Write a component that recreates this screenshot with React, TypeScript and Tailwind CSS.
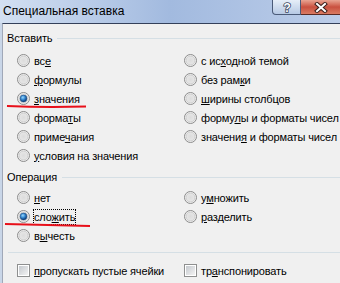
import React from "react"

type Opt = { pre: string; key: string; post: string }

const o = (pre: string, key: string, post: string): Opt => ({ pre, key, post })

const pasteLeft: Opt[] = [
  o("вс", "е", ""),
  o("", "ф", "ормулы"),
  o("", "з", "начения"),
  o("форма", "т", "ы"),
  o("приме", "ч", "ания"),
  o("", "у", "словия на значения"),
]

const pasteRight: Opt[] = [
  o("с ис", "х", "одной темой"),
  o("без рам", "к", "и"),
  o("", "ш", "ирины столбцов"),
  o("форму", "л", "ы и форматы чисел"),
  o("значени", "я", " и форматы чисел"),
]

const Radio = ({ checked }: { checked?: boolean }) => (
  <svg width="13" height="13" viewBox="0 0 13 13" className="shrink-0">
    <defs>
      <radialGradient id="rfill" cx="0.5" cy="0.5" r="0.5">
        <stop offset="0" stopColor="#dcdcdc" />
        <stop offset="0.7" stopColor="#e6e6e6" />
        <stop offset="1" stopColor="#f8f8f8" />
      </radialGradient>
      <radialGradient id="rdot" cx="0.4" cy="0.35" r="0.6">
        <stop offset="0" stopColor="#9ad7fb" />
        <stop offset="0.5" stopColor="#3b8fd6" />
        <stop offset="1" stopColor="#0d3f7c" />
      </radialGradient>
    </defs>
    <circle cx="6.5" cy="6.5" r="6" fill="url(#rfill)" stroke="#8b8b8b" strokeWidth="1" />
    <circle cx="6.5" cy="6.5" r="4.4" fill="none" stroke="#c9c9c9" strokeWidth="0.8" />
    {checked && <circle cx="6.5" cy="6.5" r="3.4" fill="url(#rdot)" stroke="#1f4f86" strokeWidth="0.6" />}
  </svg>
)

const Check = () => (
  <span className="w-[13px] h-[13px] shrink-0 border border-[#8e8f8f] bg-white p-[1px]">
    <span className="block w-full h-full bg-gradient-to-br from-[#c5c9ce] to-[#f3f3f3]" />
  </span>
)

const Label = ({ opt, focus }: { opt: Opt; focus?: boolean }) => (
  <span
    className={`border leading-[14px] whitespace-nowrap ${
      focus ? "border-dotted border-black" : "border-transparent"
    }`}
  >
    {opt.pre}
    <span className="underline underline-offset-[1px]">{opt.key}</span>
    {opt.post}
  </span>
)

const RadioRow = ({ opt, checked, focus }: { opt: Opt; checked?: boolean; focus?: boolean }) => (
  <div className="h-[19px] flex items-center gap-[3px]">
    <Radio checked={checked} />
    <Label opt={opt} focus={focus} />
  </div>
)

const GroupHead = ({ title }: { title: string }) => (
  <div className="h-4 flex items-center gap-[5px] pl-[4px]">
    <span className="leading-4">{title}</span>
    <span className="flex-1 h-px bg-[#d5dfe5]" />
  </div>
)

export default function App() {
  return (
    <div
      className="w-[340px] h-[283px] overflow-hidden flex flex-col bg-[#c9d6e8] text-[11px] tracking-[-0.15px] text-black"
      style={{ fontFamily: '"Liberation Sans", Arial, sans-serif' }}
    >
      <div className="h-[23px] shrink-0 flex justify-between bg-gradient-to-r from-[#d3e0f2] via-[#a2badf] to-[#bccde9]">
        <span className="pl-[3px] pt-[3px] leading-4 text-[12px] tracking-normal">Специальная вставка</span>
        <div className="flex h-[15px]">
          <div className="w-[29px] h-full rounded-bl-[4px] border border-t-0 border-[#4a5a78] bg-gradient-to-b from-[#e6eef8] to-[#b7c9e4] flex items-center justify-center">
            <svg width="12" height="13" viewBox="0 0 12 13">
              <text
                x="6"
                y="11"
                textAnchor="middle"
                fontSize="12"
                fontWeight="bold"
                fontFamily="Liberation Sans, sans-serif"
                fill="#fff"
                stroke="#3a4660"
                strokeWidth="1.6"
                paintOrder="stroke"
              >
                ?
              </text>
            </svg>
          </div>
          <div className="w-[39px] h-full border-b border-[#5a2a24] bg-gradient-to-b from-[#e8a493] via-[#c9503f] to-[#d97a62] flex items-center justify-center">
            <svg width="14" height="11" viewBox="0 0 14 11">
              <path d="M3 2 L11 9 M11 2 L3 9" stroke="#3a1e1a" strokeWidth="4" strokeLinecap="square" />
              <path d="M3 2 L11 9 M11 2 L3 9" stroke="#fff" strokeWidth="2" strokeLinecap="square" />
            </svg>
          </div>
        </div>
      </div>
      <div className="flex-1 ml-[2px] border-t border-l border-t-[#34405a] border-l-[#a0a8b8] bg-[#f0f0f0] relative pt-[6px]">
        <GroupHead title="Вставить" />
        <div className="mt-[5px] grid grid-cols-[167px_1fr] pl-[14px]">
          <div>
            {pasteLeft.map((p, i) => (
              <RadioRow key={i} opt={p} checked={i === 2} />
            ))}
          </div>
          <div>
            {pasteRight.map((p, i) => (
              <RadioRow key={i} opt={p} />
            ))}
          </div>
        </div>

        <div className="mt-[4px]">
          <GroupHead title="Операция" />
        </div>
        <div className="mt-[3px] grid grid-cols-[167px_1fr] pl-[14px]">
          <div>
            <RadioRow opt={o("", "н", "ет")} />
            <RadioRow opt={o("сло", "ж", "ить")} checked focus />
            <RadioRow opt={o("в", "ы", "честь")} />
          </div>
          <div>
            <RadioRow opt={o("у", "м", "ножить")} />
            <RadioRow opt={o("", "р", "азделить")} />
          </div>
        </div>

        <div className="mt-[7px] ml-[5px] h-px bg-[#d5dfe5]" />

        <div className="mt-[8px] grid grid-cols-[167px_1fr] pl-[14px]">
          <div className="h-[19px] flex items-center gap-[3px]">
            <Check />
            <Label opt={o("", "п", "ропускать пустые ячейки")} />
          </div>
          <div className="h-[19px] flex items-center gap-[3px]">
            <Check />
            <Label opt={o("тр", "а", "нспонировать")} />
          </div>
        </div>

        {/* red marker strokes drawn over the dialog */}
        <svg className="absolute left-0 top-0 pointer-events-none" width="338" height="258">
          <path d="M4 82 Q40 83.5 83 82.5" stroke="#e8101a" strokeWidth="2" fill="none" />
          <path d="M2 200 Q40 201 87 202" stroke="#e8101a" strokeWidth="2" fill="none" />
        </svg>
      </div>
    </div>
  )
}
